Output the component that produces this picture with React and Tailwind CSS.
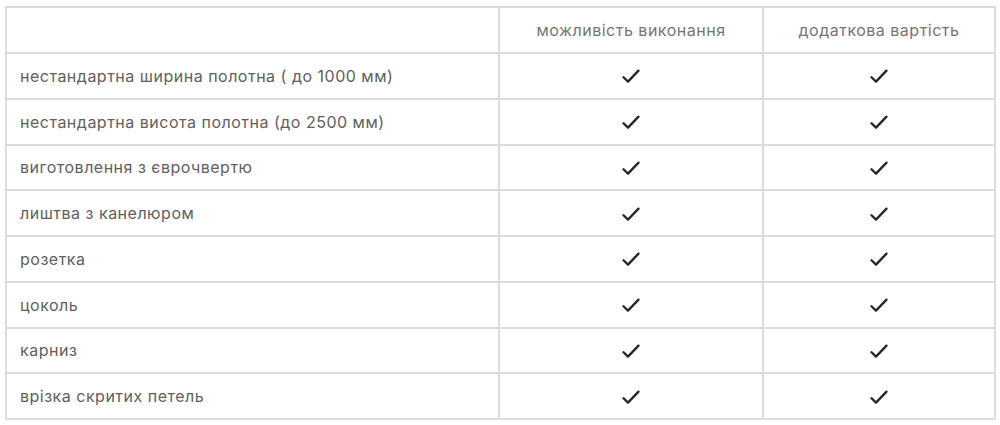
const rows = [
  "нестандартна ширина полотна ( до 1000 мм)",
  "нестандартна висота полотна (до 2500 мм)",
  "виготовлення з єврочвертю",
  "лиштва з канелюром",
  "розетка",
  "цоколь",
  "карниз",
  "врізка скритих петель",
];

function Check() {
  return (
    <svg width="18" height="15" viewBox="0 0 18 15" className="inline-block" aria-hidden>
      <path
        d="M1.5 8.2 L6 12.6 L16.5 1.6"
        fill="none"
        stroke="#262626"
        strokeWidth="2.3"
        strokeLinecap="round"
        strokeLinejoin="round"
      />
    </svg>
  );
}

export default function App() {
  return (
    <div
      className="bg-white pl-[5px] pt-[6px] w-[1000px] h-[425px]"
      style={{ fontFamily: 'Inter, "Liberation Sans", Arial, sans-serif' }}
    >
      <table className="w-[989px] border-collapse border-2 border-[#dcdcdc] table-fixed tracking-[0.5px]">
        <colgroup>
          <col className="w-[493px]" />
          <col className="w-[264px]" />
          <col className="w-[232px]" />
        </colgroup>
        <thead>
          <tr className="h-[46px]">
            <th className="border-2 border-[#dcdcdc]" />
            <th className="border-2 border-[#dcdcdc] text-center font-normal text-[16px] text-[#757575]">
              можливість виконання
            </th>
            <th className="border-2 border-[#dcdcdc] text-center font-normal text-[16px] text-[#757575]">
              додаткова вартість
            </th>
          </tr>
        </thead>
        <tbody>
          {rows.map((label) => (
            <tr key={label} className="h-[45.75px]">
              <td className="border-2 border-[#dcdcdc] pl-[13px] text-[16px] text-[#606060]">{label}</td>
              <td className="border-2 border-[#dcdcdc] text-center leading-none">
                <Check />
              </td>
              <td className="border-2 border-[#dcdcdc] text-center leading-none">
                <Check />
              </td>
            </tr>
          ))}
        </tbody>
      </table>
    </div>
  );
}
